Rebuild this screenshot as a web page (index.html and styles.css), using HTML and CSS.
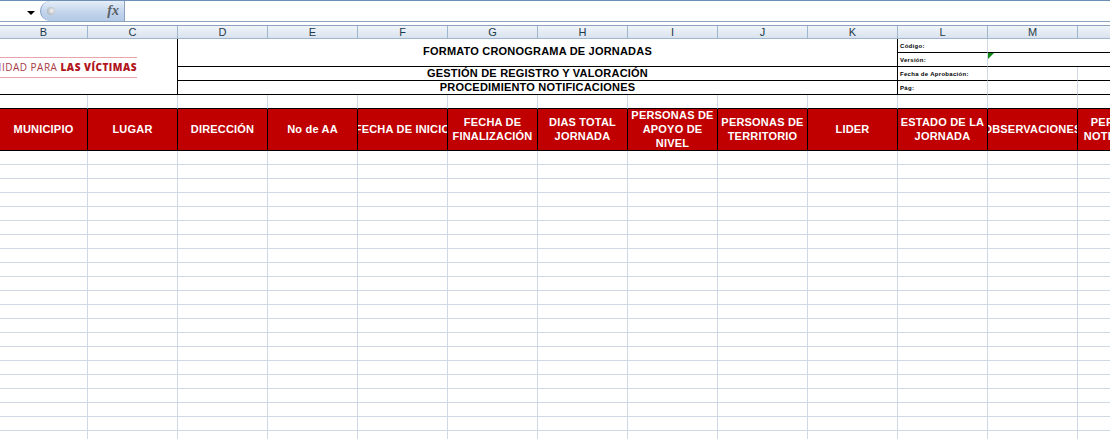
FILE: index.html
```html
<!DOCTYPE html>
<html lang="es">
<head>
<meta charset="utf-8">
<title>Cronograma de jornadas</title>
<link rel="stylesheet" href="styles.css">
</head>
<body>
<div class="formula-bar">
  <div class="name-box"><span class="caret"></span></div>
  <div class="fx-wrap">
    <span class="orb"></span>
    <span class="fx">fx</span>
  </div>
  <div class="formula-input"></div>
</div>
<div class="col-heads">
  <div class="ch">B</div><div class="ch">C</div><div class="ch">D</div><div class="ch">E</div><div class="ch">F</div><div class="ch">G</div><div class="ch">H</div><div class="ch">I</div><div class="ch">J</div><div class="ch">K</div><div class="ch">L</div><div class="ch">M</div><div class="ch open"></div>
</div>
<div class="sheet">
  <div class="logo">
    <div class="logo-text">UNIDAD PARA <b>LAS VÍCTIMAS</b></div>
  </div>
  <div class="title t1">FORMATO CRONOGRAMA DE JORNADAS</div>
  <div class="meta m1">Código:</div><div class="metav v1"></div>
  <div class="meta m2">Versión:</div><div class="metav v2"><span class="flag"></span></div>
  <div class="title t2">GESTIÓN DE REGISTRO Y VALORACIÓN</div>
  <div class="meta m3">Fecha de Aprobación:</div><div class="metav v3"></div><div class="metan r3"></div>
  <div class="title t3">PROCEDIMIENTO NOTIFICACIONES</div>
  <div class="meta m4">Pág:</div><div class="metav v4"></div><div class="metan r4"></div>

  <div class="gap"></div><div class="gap"></div><div class="gap"></div><div class="gap"></div><div class="gap"></div><div class="gap"></div><div class="gap"></div><div class="gap"></div><div class="gap"></div><div class="gap"></div><div class="gap"></div><div class="gap"></div><div class="gap open"></div>

  <div class="th">MUNICIPIO</div>
  <div class="th">LUGAR</div>
  <div class="th">DIRECCIÓN</div>
  <div class="th">No de AA</div>
  <div class="th nowrap"><span>FECHA DE INICIO</span></div>
  <div class="th">FECHA DE FINALIZACIÓN</div>
  <div class="th">DIAS TOTAL JORNADA</div>
  <div class="th">PERSONAS DE APOYO DE NIVEL</div>
  <div class="th">PERSONAS DE TERRITORIO</div>
  <div class="th">LIDER</div>
  <div class="th">ESTADO DE LA JORNADA</div>
  <div class="th nowrap"><span>OBSERVACIONES</span></div>
  <div class="th partial"><span>PERSONAS NOTIFICADAS</span></div>
</div>
<div class="body-grid"></div>
<script src="grid.js"></script>
</body>
</html>
```
FILE: grid.js
```js
var grid = document.querySelector('.body-grid');
for (var r = 0; r < 21; r++) {
  for (var c = 0; c < 13; c++) {
    var cell = document.createElement('div');
    cell.className = c === 12 ? 'cell open' : 'cell';
    grid.appendChild(cell);
  }
}
```
FILE: styles.css
```css
* { box-sizing: border-box; }
html, body { margin: 0; padding: 0; }
html { overflow: hidden; }
body {
  width: 1110px;
  height: 439px;
  overflow: hidden;
  background: #fff;
  font-family: "Liberation Sans", Arial, sans-serif;
}
.formula-bar {
  display: flex;
  height: 22px;
  background: #fff;
  border-top: 1px solid #6b8fb5;
  border-bottom: 1px solid #8ba3bf;
}
.name-box {
  width: 40px;
  display: flex;
  justify-content: flex-end;
  align-items: center;
  padding-right: 5px;
  padding-top: 3px;
}
.caret {
  width: 0;
  height: 0;
  border-left: 4px solid transparent;
  border-right: 4px solid transparent;
  border-top: 4px solid #000;
}
.fx-wrap {
  width: 85px;
  height: 20px;
  display: flex;
  align-items: center;
  justify-content: space-between;
  padding: 0 5px 0 6px;
  background: linear-gradient(#e6eef8, #c3d5ec 55%, #b3c9e6);
  border-right: 1px solid #8ba3bf;
  border-left: 1px solid #7d9cc2;
  border-radius: 10px 0 0 10px;
}
.orb {
  width: 8px;
  height: 8px;
  border-radius: 50%;
  background: radial-gradient(circle at 60% 45%, #f4f4f4, #9aa0a8);
}
.fx {
  font-family: "Liberation Serif", serif;
  font-style: italic;
  font-weight: bold;
  font-size: 14px;
  color: #5a5f66;
}
.formula-input { flex: 1; }
.col-heads {
  display: grid;
  grid-template-columns: 88px repeat(11, 90px) 32px;
  height: 14px;
  margin-top: 3px;
  border-top: 1px solid #8ba3bf;
  border-bottom: 1px solid #9eb6ce;
}
.ch {
  background: linear-gradient(#f0f4f9, #d9e2ee);
  border-right: 1px solid #9eb6ce;
  color: #1f3a4a;
  font-size: 11px;
  line-height: 12px;
  text-align: center;
}
.sheet {
  display: grid;
  grid-template-columns: 88px repeat(11, 90px) 32px;
  grid-template-rows: 14px 14px 14px 14px 14px 42px;
}
.logo {
  grid-column: 1 / 3;
  grid-row: 1 / 5;
  border-right: 1px solid #000;
  border-bottom: 1px solid #000;
  display: flex;
  align-items: center;
  justify-content: flex-end;
  overflow: hidden;
  padding: 2px 40px 0 0;
}
.logo-text {
  flex: none;
  font-family: "Open Sans", sans-serif;
  font-size: 10px;
  letter-spacing: 0.5px;
  line-height: 19px;
  height: 21px;
  white-space: nowrap;
  color: #a83a44;
  border-top: 1px solid #eaa4ab;
  border-bottom: 1px solid #eaa4ab;
}
.logo-text b { color: #b11620; font-weight: 800; }
.title {
  grid-column: 3 / 11;
  border-right: 1px solid #000;
  border-bottom: 1px solid #000;
  text-align: center;
  font-weight: bold;
  font-size: 11px;
  letter-spacing: 0.2px;
  color: #000;
  line-height: 13px;
}
.t1 { grid-row: 1 / 3; padding-top: 6px; }
.t2 { grid-row: 3; }
.t3 { grid-row: 4; }
.meta {
  grid-column: 11;
  border-right: 1px solid #d0d7e5;
  border-bottom: 1px solid #000;
  font-size: 6px;
  font-weight: bold;
  letter-spacing: 0.3px;
  line-height: 14px;
  padding-left: 2px;
  color: #000;
  white-space: nowrap;
}
.m1 { grid-row: 1; }
.m2 { grid-row: 2; }
.m3 { grid-row: 3; }
.m4 { grid-row: 4; }
.metav {
  grid-column: 12 / 14;
  border-bottom: 1px solid #000;
  position: relative;
}
.v3, .v4 { grid-column: 12; border-right: 1px solid #d0d7e5; }
.metan { grid-column: 13; border-bottom: 1px solid #000; }
.flag {
  position: absolute;
  left: 0;
  top: 0;
  width: 0;
  height: 0;
  border-top: 6px solid #0a8a14;
  border-right: 6px solid transparent;
}
.v1 { grid-row: 1; }
.v2 { grid-row: 2; }
.v3, .r3 { grid-row: 3; }
.v4, .r4 { grid-row: 4; }
.gap {
  grid-row: 5;
  border-right: 1px solid #d0d7e5;
  border-bottom: 1px solid #000;
}
.th {
  grid-row: 6;
  background: #c00000;
  color: #fff;
  font-size: 11px;
  font-weight: bold;
  letter-spacing: 0.2px;
  line-height: 14px;
  text-align: center;
  display: flex;
  align-items: center;
  justify-content: center;
  padding-bottom: 1px;
  border-right: 1px solid #000;
  border-bottom: 1px solid #000;
  overflow: hidden;
}
.th.nowrap span { flex: none; white-space: nowrap; }
.th.partial { justify-content: flex-start; border-right: 0; }
.th.partial span { flex: none; width: 89px; }
.body-grid {
  display: grid;
  grid-template-columns: 88px repeat(11, 90px) 32px;
  grid-auto-rows: 14px;
}
.cell {
  border-right: 1px solid #d0d7e5;
  border-bottom: 1px solid #d0d7e5;
}
.ch.open, .gap.open, .cell.open { border-right: 0; }
```
